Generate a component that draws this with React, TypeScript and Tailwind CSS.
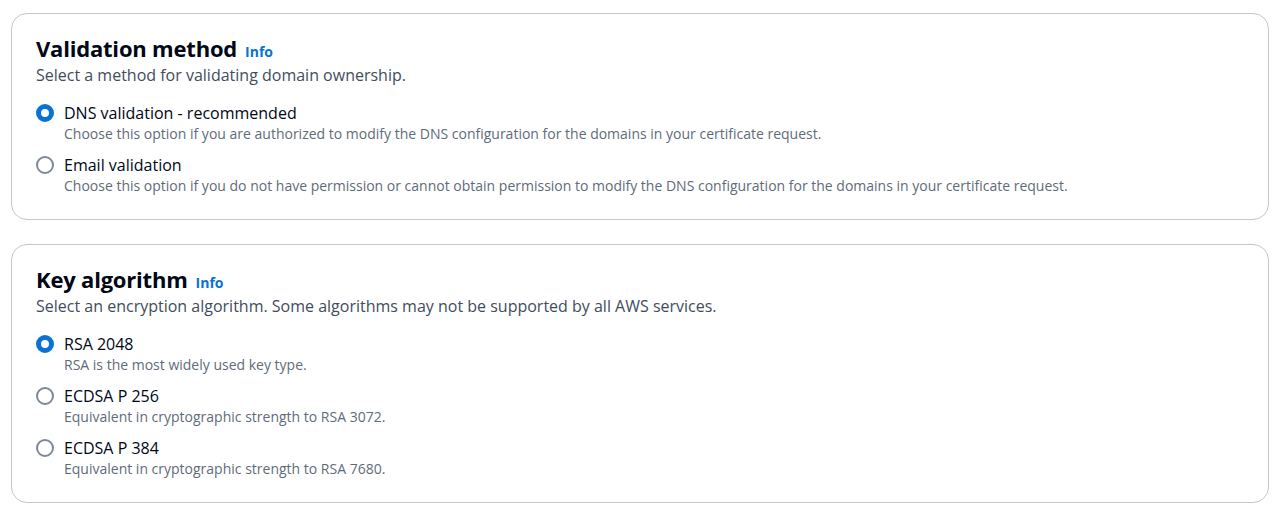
import React, { useState } from 'react'

type Opcion = { id: string; label: string; desc: string }

const VALIDACION: Opcion[] = [
  { id: 'dns', label: 'DNS validation - recommended', desc: 'Choose this option if you are authorized to modify the DNS configuration for the domains in your certificate request.' },
  { id: 'email', label: 'Email validation', desc: 'Choose this option if you do not have permission or cannot obtain permission to modify the DNS configuration for the domains in your certificate request.' },
]

const ALGORITMOS: Opcion[] = [
  { id: 'rsa', label: 'RSA 2048', desc: 'RSA is the most widely used key type.' },
  { id: 'p256', label: 'ECDSA P 256', desc: 'Equivalent in cryptographic strength to RSA 3072.' },
  { id: 'p384', label: 'ECDSA P 384', desc: 'Equivalent in cryptographic strength to RSA 7680.' },
]

function Radio({ checked }: { checked: boolean }) {
  return checked ? (
    <span className="w-[18px] h-[18px] rounded-full border-[5px] border-[#0972d3] bg-white shrink-0 box-border" />
  ) : (
    <span className="w-[18px] h-[18px] rounded-full border-2 border-[#7d8998] bg-white shrink-0 box-border" />
  )
}

function Panel({ title, sub, opciones, value, onChange }: { title: string; sub: string; opciones: Opcion[]; value: string; onChange: (v: string) => void }) {
  return (
    <div className="bg-white border border-[#c6c6cd] rounded-[16px] pl-[24px] pr-6 pt-[20px] pb-[23px]">
      <div className="flex items-baseline gap-[8px]">
        <h2 className="text-[22px] font-bold text-[#000716] leading-[28px] tracking-[-0.2px]">{title}</h2>
        <a className="text-[14px] font-bold text-[#0972d3] cursor-pointer">Info</a>
      </div>
      <p className="text-[16px] text-[#414d5c] leading-[22px] mt-[2px]">{sub}</p>
      <div className="mt-[16px] flex flex-col gap-[10px]">
        {opciones.map(o => (
          <div key={o.id} onClick={() => onChange(o.id)} className="flex gap-[10px] cursor-pointer">
            <div className="h-[22px] flex items-center"><Radio checked={value === o.id} /></div>
            <div>
              <div className="text-[16px] leading-[22px] text-[#000716]">{o.label}</div>
              <div className="text-[14px] leading-[20px] text-[#5f6b7a]">{o.desc}</div>
            </div>
          </div>
        ))}
      </div>
    </div>
  )
}

export default function App() {
  const [metodo, setMetodo] = useState('dns')
  const [algo, setAlgo] = useState('rsa')

  return (
    <div className="bg-white min-h-screen px-[11px] pt-[13px] flex flex-col gap-[24px]" style={{ fontFamily: '"Open Sans", "Noto Sans", Arial, sans-serif' }}>
      <Panel title="Validation method" sub="Select a method for validating domain ownership." opciones={VALIDACION} value={metodo} onChange={setMetodo} />
      <Panel title="Key algorithm" sub="Select an encryption algorithm. Some algorithms may not be supported by all AWS services." opciones={ALGORITMOS} value={algo} onChange={setAlgo} />
    </div>
  )
}
